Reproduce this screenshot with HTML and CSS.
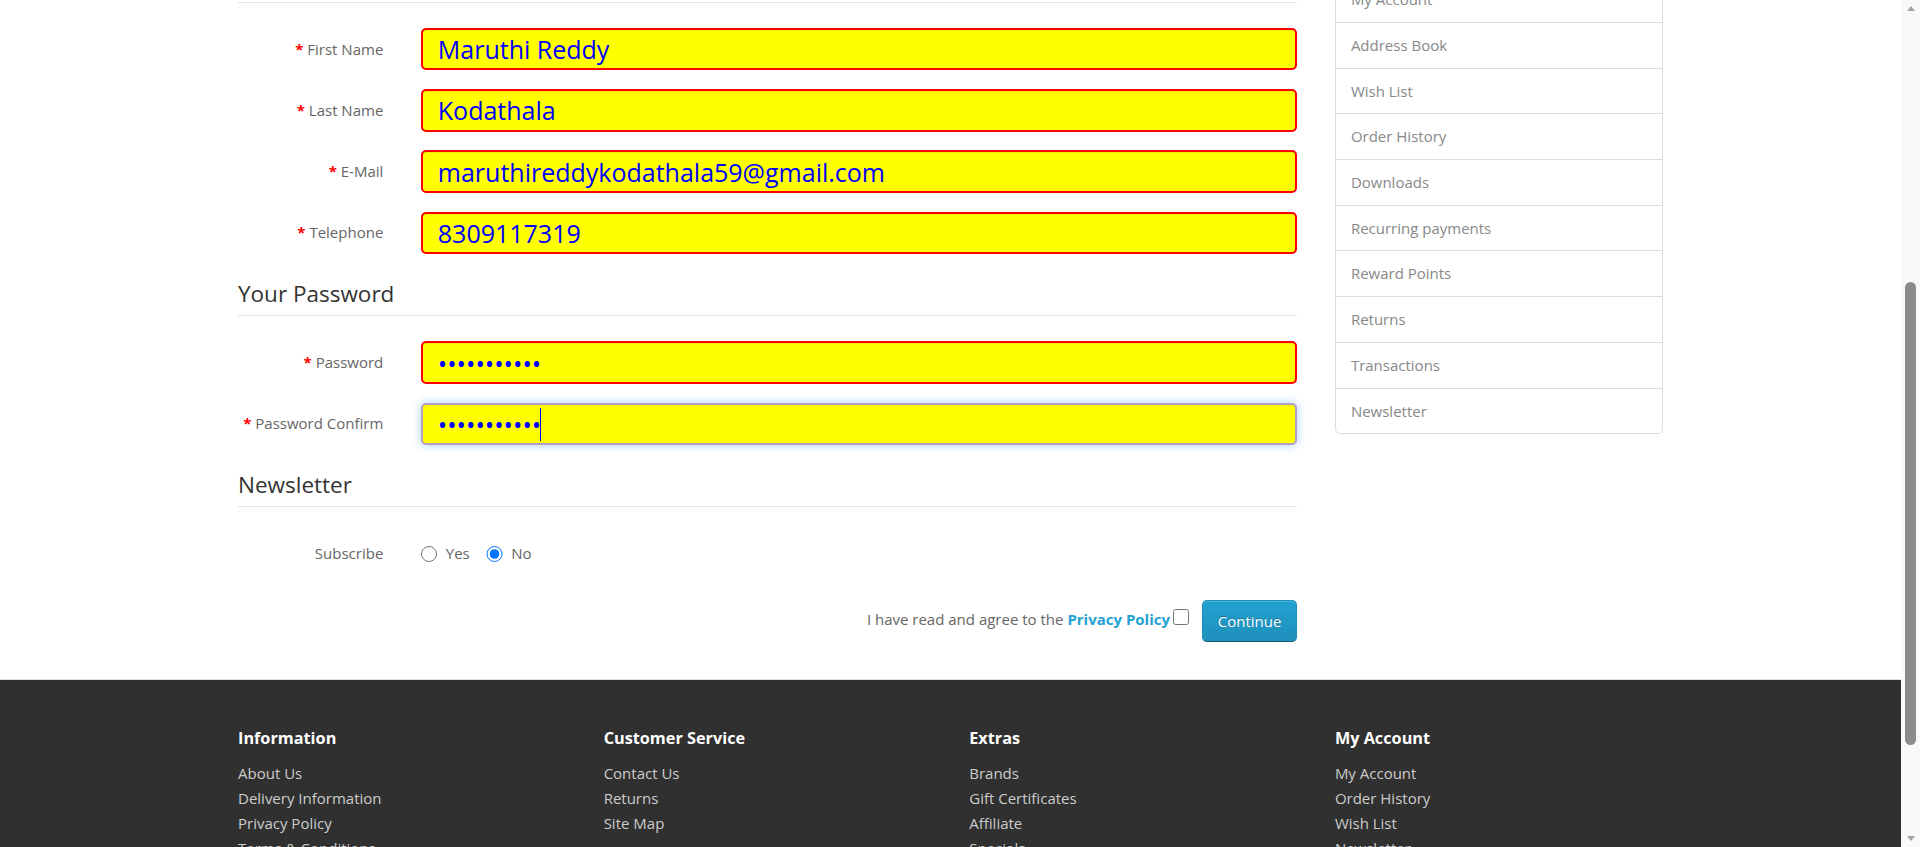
FILE: index.html
```html
<!DOCTYPE html>
<html lang="en">
<head>
<meta charset="utf-8">
<title>Register Account</title>
<link rel="stylesheet" href="styles.css">
</head>
<body>
<div class="viewport">
  <div class="page">
    <div class="container">
      <div class="row">
        <div id="content" class="content">
          <h1>Register Account</h1>
          <p>If you already have an account with us, please login at the <a href="#">login page</a>.</p>
          <form class="form-horizontal" action="#">
            <fieldset>
              <legend>Your Personal Details</legend>
              <div class="form-group required">
                <label class="control-label" for="input-firstname">First Name</label>
                <div class="field"><input class="form-control hl" id="input-firstname" type="text" value="Maruthi Reddy"></div>
              </div>
              <div class="form-group required">
                <label class="control-label" for="input-lastname">Last Name</label>
                <div class="field"><input class="form-control hl" id="input-lastname" type="text" value="Kodathala"></div>
              </div>
              <div class="form-group required">
                <label class="control-label" for="input-email">E-Mail</label>
                <div class="field"><input class="form-control hl" id="input-email" type="email" value="maruthireddykodathala59@gmail.com"></div>
              </div>
              <div class="form-group required">
                <label class="control-label" for="input-telephone">Telephone</label>
                <div class="field"><input class="form-control hl" id="input-telephone" type="tel" value="8309117319"></div>
              </div>
            </fieldset>
            <fieldset>
              <legend>Your Password</legend>
              <div class="form-group required">
                <label class="control-label" for="input-password">Password</label>
                <div class="field"><input class="form-control hl" id="input-password" type="password" value="Maruthi@123"></div>
              </div>
              <div class="form-group required">
                <label class="control-label" for="input-confirm">Password Confirm</label>
                <div class="field field-caret"><input class="form-control hl is-focused" id="input-confirm" type="password" value="Maruthi@123"></div>
              </div>
            </fieldset>
            <fieldset>
              <legend>Newsletter</legend>
              <div class="form-group">
                <label class="control-label">Subscribe</label>
                <div class="field radios">
                  <label class="radio-inline"><input type="radio" name="newsletter" value="1">Yes</label>
                  <label class="radio-inline"><input type="radio" name="newsletter" value="0" checked>No</label>
                </div>
              </div>
            </fieldset>
            <div class="buttons">I have read and agree to the <a href="#" class="agree-link">Privacy Policy</a><input type="checkbox" name="agree" value="1" class="agree-box"> &nbsp; <button type="submit" class="btn btn-primary">Continue</button></div>
          </form>
        </div>
        <aside class="column-right">
          <nav class="list-group">
            <a href="#" class="list-group-item">Login</a>
            <a href="#" class="list-group-item">Register</a>
            <a href="#" class="list-group-item">Forgotten Password</a>
            <a href="#" class="list-group-item">My Account</a>
            <a href="#" class="list-group-item">Address Book</a>
            <a href="#" class="list-group-item">Wish List</a>
            <a href="#" class="list-group-item">Order History</a>
            <a href="#" class="list-group-item">Downloads</a>
            <a href="#" class="list-group-item">Recurring payments</a>
            <a href="#" class="list-group-item">Reward Points</a>
            <a href="#" class="list-group-item">Returns</a>
            <a href="#" class="list-group-item">Transactions</a>
            <a href="#" class="list-group-item">Newsletter</a>
          </nav>
        </aside>
      </div>
    </div>
    <footer class="footer">
      <div class="container">
        <div class="footer-row">
          <div class="footer-col">
            <h5>Information</h5>
            <ul>
              <li><a href="#">About Us</a></li>
              <li><a href="#">Delivery Information</a></li>
              <li><a href="#">Privacy Policy</a></li>
              <li><a href="#">Terms &amp; Conditions</a></li>
            </ul>
          </div>
          <div class="footer-col">
            <h5>Customer Service</h5>
            <ul>
              <li><a href="#">Contact Us</a></li>
              <li><a href="#">Returns</a></li>
              <li><a href="#">Site Map</a></li>
            </ul>
          </div>
          <div class="footer-col">
            <h5>Extras</h5>
            <ul>
              <li><a href="#">Brands</a></li>
              <li><a href="#">Gift Certificates</a></li>
              <li><a href="#">Affiliate</a></li>
              <li><a href="#">Specials</a></li>
            </ul>
          </div>
          <div class="footer-col">
            <h5>My Account</h5>
            <ul>
              <li><a href="#">My Account</a></li>
              <li><a href="#">Order History</a></li>
              <li><a href="#">Wish List</a></li>
              <li><a href="#">Newsletter</a></li>
            </ul>
          </div>
        </div>
      </div>
    </footer>
  </div>
</div>
<div class="scrollbar" aria-hidden="true">
  <span class="sb-arrow sb-up"></span>
  <span class="sb-track"><span class="sb-thumb"></span></span>
  <span class="sb-arrow sb-down"></span>
</div>
</body>
</html>
```

FILE: styles.css
```css
* {
  box-sizing: border-box;
}

html,
body {
  margin: 0;
  height: 847px;
  overflow: hidden;
}

body {
  display: flex;
  font-family: "Open Sans", "Liberation Sans", sans-serif;
  font-size: 15px;
  line-height: 25px;
  color: #666;
  background: #fff;
}

a {
  color: #23a1d1;
  text-decoration: none;
}

/* visible window of the scrolled page */
.viewport {
  flex: 1 1 auto;
  min-width: 0;
  height: 847px;
  overflow: hidden;
}

.page {
  margin-top: -161px; /* scroll offset of the captured view */
}

.container {
  width: 1462.5px;
  margin: 0 auto;
  padding: 0 18.75px;
}

.row {
  display: grid;
  grid-template-columns: 3fr 1fr;
  margin: 0 -18.75px;
}

.content,
.column-right {
  min-width: 0;
  padding: 0 18.75px;
}

.content h1 {
  margin: 25px 0 12.5px;
  font-size: 41.25px;
  line-height: 1.1;
  font-weight: 400;
  color: #444;
}

.content p {
  margin: 0 0 12.5px;
}

fieldset {
  margin: 0;
  padding: 0;
  border: 0;
  min-width: 0;
}

legend {
  display: block;
  width: 100%;
  padding: 7.75px 0 9.75px;
  margin: 0 0 25px;
  font-size: 22.5px;
  line-height: 25px;
  color: #333;
  border-bottom: 1px solid #e5e5e5;
}

.form-group {
  display: grid;
  grid-template-columns: 1fr 5fr;
  margin: 0 -18.75px 18.75px;
}

.control-label {
  padding: 8.75px 18.75px 0;
  text-align: right;
  font-size: 15px;
  line-height: 25px;
  color: #666;
}

.required .control-label::before {
  content: "* ";
  color: #f00;
  font-weight: 700;
}

.field {
  min-width: 0;
  padding: 0 18.75px;
}

.form-control {
  display: block;
  width: 100%;
  height: 42.5px;
  padding: 6px 15px;
  font-family: "Open Sans", "Liberation Sans", sans-serif;
  font-size: 25px;
  color: #00f;
  background: #fff;
  border: 1px solid #ccc;
  border-radius: 5px;
  box-shadow: inset 0 1px 1px rgba(0, 0, 0, 0.075);
  outline: none;
}

.form-control.hl {
  background: #ff0;
  border: 2px solid #f00;
}

.form-control.hl.is-focused {
  border-color: #b59ec6;
  box-shadow: inset 0 1px 1px rgba(0, 0, 0, 0.075), 0 0 10px rgba(102, 175, 233, 0.6);
}

/* text caret of the focused field */
.field-caret {
  position: relative;
}

.field-caret::after {
  content: "";
  position: absolute;
  left: 138px;
  top: 5px;
  width: 1px;
  height: 33px;
  background: #00f;
}

.radios {
  display: flex;
  align-items: flex-start;
}

.radio-inline {
  display: flex;
  align-items: center;
  padding-top: 8.75px;
  line-height: 25px;
  color: #666;
}

.radio-inline + .radio-inline {
  margin-left: 16.5px;
}

.radio-inline input {
  width: 16.25px;
  height: 16.25px;
  margin: 0 8.75px 0 0;
}

.buttons {
  margin-top: 15px;
  text-align: right;
  line-height: 25px;
}

.agree-link {
  font-weight: 700;
}

.agree-box {
  width: 16.25px;
  height: 16.25px;
  margin: 0 1.25px 2px 2.5px;
  vertical-align: baseline;
}

.btn {
  display: inline-block;
  vertical-align: middle;
  height: 42.5px;
  padding: 0 15px;
  font-family: "Open Sans", "Liberation Sans", sans-serif;
  font-size: 15px;
  line-height: 20px;
  border: 1px solid #ccc;
  border-radius: 5px;
  cursor: pointer;
}

.btn-primary {
  color: #fff;
  text-shadow: 0 -1px 0 rgba(0, 0, 0, 0.25);
  background-color: #229ac8;
  background-image: linear-gradient(to bottom, #23a1d1, #1f90bb);
  border-color: #1f90bb #1f90bb #145e7a;
  box-shadow: inset 0 1px 0 rgba(255, 255, 255, 0.2), 0 1px 2px rgba(0, 0, 0, 0.05);
}

/* right column */
.list-group {
  display: flex;
  flex-direction: column;
  margin-bottom: 25px;
}

.list-group-item {
  display: block;
  padding: 10px 15px;
  margin-bottom: -1px;
  line-height: 24.72px;
  color: #888;
  border: 1px solid #ddd;
  background: #fff;
}

.list-group-item:first-child {
  border-radius: 5px 5px 0 0;
}

.list-group-item:last-child {
  border-radius: 0 0 5px 5px;
}

/* footer */
.footer {
  margin-top: 36.3px;
  padding-top: 37.5px;
  background: #303030;
  border-top: 1px solid #ddd;
  color: #e2e2e2;
}

.footer-row {
  display: grid;
  grid-template-columns: repeat(4, 1fr);
  margin: 0 -18.75px;
}

.footer-col {
  padding: 0 18.75px;
}

.footer h5 {
  margin: 12.5px 0 13.75px;
  font-size: 16.25px;
  line-height: 1.1;
  font-weight: 700;
  color: #fff;
}

.footer ul {
  list-style: none;
  margin: 0 0 12.5px;
  padding: 0;
}

.footer a {
  color: #ccc;
}

/* window scrollbar */
.scrollbar {
  flex: 0 0 19px;
  height: 847px;
  display: flex;
  flex-direction: column;
  background: #f9f9f9;
}

.sb-arrow {
  flex: none;
  height: 17px;
  display: flex;
  align-items: center;
  justify-content: center;
}

.sb-up::before,
.sb-down::before {
  content: "";
  border-style: solid;
  border-color: transparent;
}

.sb-up::before {
  border-width: 0 4.5px 5px;
  border-bottom-color: #a3a3a3;
}

.sb-down::before {
  border-width: 5px 4.5px 0;
  border-top-color: #a3a3a3;
}

.sb-track {
  flex: 1 1 auto;
  display: flex;
  justify-content: center;
}

.sb-thumb {
  width: 11px;
  height: 463px;
  margin-top: 265px;
  border-radius: 6px;
  background: #8b8b8b;
}
```
